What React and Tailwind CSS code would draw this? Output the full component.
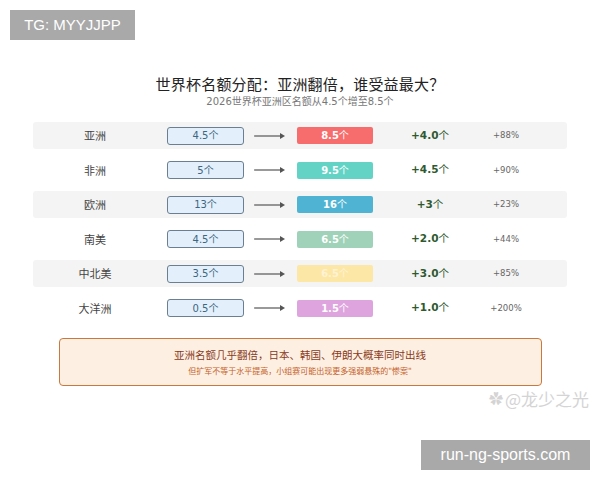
const ROWS = [
  { name: '亚洲', from: '4.5', to: '8.5', inc: '+4.0', pct: '+88%', color: 'bg-[#f76c6c]', text: 'text-white', striped: true },
  { name: '非洲', from: '5', to: '9.5', inc: '+4.5', pct: '+90%', color: 'bg-[#63d3c6]', text: 'text-white', striped: false },
  { name: '欧洲', from: '13', to: '16', inc: '+3', pct: '+23%', color: 'bg-[#4fb4d3]', text: 'text-white', striped: true },
  { name: '南美', from: '4.5', to: '6.5', inc: '+2.0', pct: '+44%', color: 'bg-[#9fd2b8]', text: 'text-white', striped: false },
  { name: '中北美', from: '3.5', to: '6.5', inc: '+3.0', pct: '+85%', color: 'bg-[#fde7a6]', text: 'text-[#fdf3d3]', striped: true },
  { name: '大洋洲', from: '0.5', to: '1.5', inc: '+1.0', pct: '+200%', color: 'bg-[#dea4de]', text: 'text-white', striped: false },
];

const CJK = "font-['DejaVu_Sans','Noto_Sans_CJK_SC',sans-serif]";

function Arrow() {
  return (
    <svg viewBox="0 0 32 10" className="h-[10px] w-[32px]" fill="none">
      <path d="M0 5h27" stroke="#555" strokeWidth="1.2" />
      <path d="M26 2l5 3-5 3z" fill="#555" />
    </svg>
  );
}

export default function App() {
  return (
    <div className={`relative flex h-[480px] w-[600px] flex-col items-center overflow-hidden bg-white pt-[73px] ${CJK}`}>
      {/* top tag */}
      <div className="absolute left-[10px] top-[10px] flex h-[30px] w-[125px] items-center justify-center bg-[#a9a9a9] font-['Liberation_Sans',sans-serif] text-[15px] text-white">
        TG: MYYJJPP
      </div>

      <h1 className="font-['Noto_Sans_CJK_SC',sans-serif] text-[15px] leading-[22px] tracking-[0.2px] text-[#222]">
        世界杯名额分配：亚洲翻倍，谁受益最大？
      </h1>
      <p className="text-[10px] leading-[14px] text-[#777]">2026世界杯亚洲区名额从4.5个增至8.5个</p>

      {/* table */}
      <div className="mt-[13px] flex w-[534px] flex-col gap-[7.5px]">
        {ROWS.map((r) => (
          <div
            key={r.name}
            className={`flex h-[27px] items-center rounded-[3px] ${r.striped ? 'bg-[#f4f4f4]' : ''}`}
          >
            <div className="w-[124px] text-center font-['Noto_Sans_CJK_SC',sans-serif] text-[11px] text-[#444]">{r.name}</div>
            <div className="ml-[10px] flex h-[18px] w-[77px] items-center justify-center rounded-[3px] border border-[#6b7f92] bg-[#e3f0fb] text-[10px] text-[#3d6680]">
              {r.from}个
            </div>
            <div className="ml-[10px] flex w-[32px] items-center">
              <Arrow />
            </div>
            <div className={`ml-[11px] flex h-[17px] w-[76px] items-center justify-center rounded-[2px] text-[10px] font-bold ${r.color} ${r.text}`}>
              {r.to}<span className="font-normal">个</span>
            </div>
            <div className="ml-[10px] w-[94px] text-center text-[10.5px] text-[#2f5a2f]">
              <span className="font-bold">{r.inc}</span>个
            </div>
            <div className="w-[58px] text-center text-[8.5px] text-[#666]">{r.pct}</div>
          </div>
        ))}
      </div>

      {/* callout */}
      <div className="mt-[16px] flex h-[48px] w-[483px] flex-col items-center justify-center gap-[3px] rounded-[4px] border-[1.5px] border-[#c87a3e] bg-[#fdf0e3] font-['Noto_Sans_CJK_SC',sans-serif]">
        <p className="text-[10.5px] leading-[14px] text-[#8a3b1c]">亚洲名额几乎翻倍，日本、韩国、伊朗大概率同时出线</p>
        <p className="text-[8px] leading-[11px] text-[#c5602a]">但扩军不等于水平提高，小组赛可能出现更多强弱悬殊的"惨案"</p>
      </div>

      {/* watermark */}
      <div className="absolute left-[489px] top-[386px] flex items-center gap-[2px] font-['Noto_Sans_CJK_SC',sans-serif] text-[17px] text-[#d4d4d4]">
        <span className="text-[14px]">✿</span>
        <span>@龙少之光</span>
      </div>

      {/* bottom tag */}
      <div className="absolute left-[421px] top-[440px] flex h-[30px] w-[169px] items-center justify-center bg-[#a9a9a9] font-['Liberation_Sans',sans-serif] text-[16px] text-white">
        run-ng-sports.com
      </div>
    </div>
  );
}
